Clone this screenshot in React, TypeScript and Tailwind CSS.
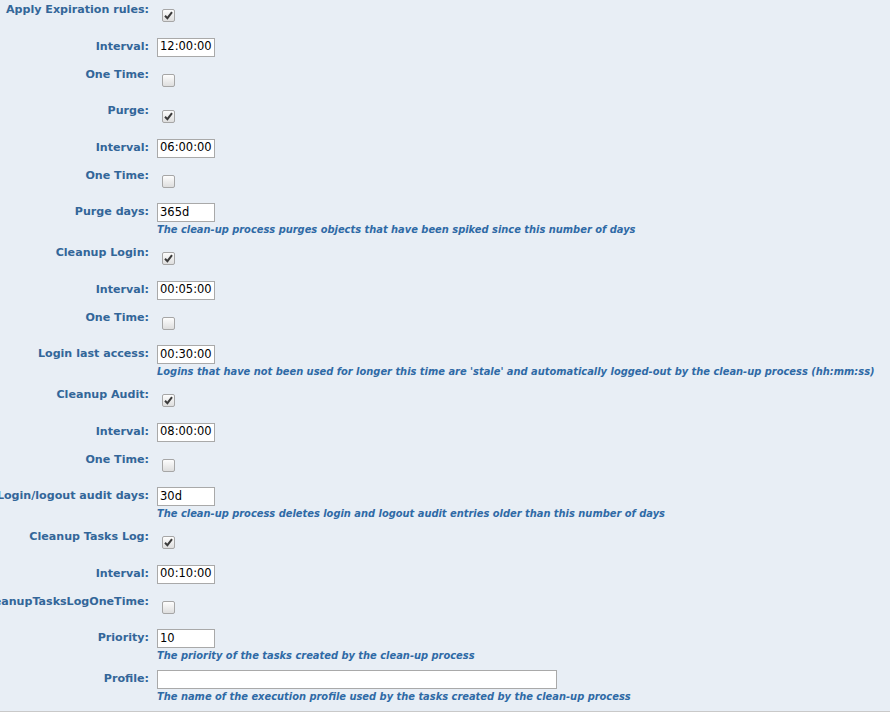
import React from 'react';

type Row = {
  label: string;
  kind: 'check' | 'input' | 'help';
  checked?: boolean;
  value?: string;
  help?: string;
  wide?: boolean;
};

const rows: Row[] = [
  { label: 'Apply Expiration rules:', kind: 'check', checked: true },
  { label: 'Interval:', kind: 'input', value: '12:00:00' },
  { label: 'One Time:', kind: 'check' },
  { label: 'Purge:', kind: 'check', checked: true },
  { label: 'Interval:', kind: 'input', value: '06:00:00' },
  { label: 'One Time:', kind: 'check' },
  {
    label: 'Purge days:',
    kind: 'help',
    value: '365d',
    help: 'The clean-up process purges objects that have been spiked since this number of days',
  },
  { label: 'Cleanup Login:', kind: 'check', checked: true },
  { label: 'Interval:', kind: 'input', value: '00:05:00' },
  { label: 'One Time:', kind: 'check' },
  {
    label: 'Login last access:',
    kind: 'help',
    value: '00:30:00',
    help: "Logins that have not been used for longer this time are 'stale' and automatically logged-out by the clean-up process (hh:mm:ss)",
  },
  { label: 'Cleanup Audit:', kind: 'check', checked: true },
  { label: 'Interval:', kind: 'input', value: '08:00:00' },
  { label: 'One Time:', kind: 'check' },
  {
    label: 'Login/logout audit days:',
    kind: 'help',
    value: '30d',
    help: 'The clean-up process deletes login and logout audit entries older than this number of days',
  },
  { label: 'Cleanup Tasks Log:', kind: 'check', checked: true },
  { label: 'Interval:', kind: 'input', value: '00:10:00' },
  { label: 'CleanupTasksLogOneTime:', kind: 'check' },
  {
    label: 'Priority:',
    kind: 'help',
    value: '10',
    help: 'The priority of the tasks created by the clean-up process',
  },
  {
    label: 'Profile:',
    kind: 'help',
    value: '',
    wide: true,
    help: 'The name of the execution profile used by the tasks created by the clean-up process',
  },
];

function Checkbox({ checked }: { checked?: boolean }) {
  return (
    <span className="mt-[8px] ml-[5px] flex h-[13px] w-[13px] items-center justify-center rounded-[2px] border border-[#a6a6a6] bg-gradient-to-b from-[#fdfdfd] to-[#dedede]">
      {checked && (
        <svg width="9" height="9" viewBox="0 0 9 9">
          <path d="M1 4.8 L3.4 7.2 L8 1.2" fill="none" stroke="#3b3b3b" strokeWidth="2" />
        </svg>
      )}
    </span>
  );
}

function TextBox({ value, wide }: { value?: string; wide?: boolean }) {
  return (
    <div
      className={`flex h-[19px] items-center border border-[#a9a9a9] bg-white pl-[2px] text-[11.5px] leading-none text-black ${
        wide ? 'w-[400px]' : 'w-[58px]'
      }`}
    >
      {value}
    </div>
  );
}

export default function App() {
  return (
    <div className="min-h-[713px] bg-white" style={{ fontFamily: '"DejaVu Sans", Verdana, sans-serif' }}>
      <div className="border-b border-[#c9c9c9] bg-[#e8eef5] pt-[1px]">
        {rows.map((r, i) => (
          <div
            key={i}
            className={`flex ${r.kind === 'check' ? 'h-[36.5px]' : r.kind === 'input' ? 'h-[28px]' : 'h-[41px]'}`}
          >
            <div className="flex w-[149px] shrink-0 justify-end overflow-hidden pt-[2px]">
              <span className="shrink-0 whitespace-nowrap text-[11.1px] leading-[13px] font-bold text-[#336699]">
                {r.label}
              </span>
            </div>
            <div className="flex flex-col pl-[8px]">
              {r.kind === 'check' ? (
                <Checkbox checked={r.checked} />
              ) : (
                <TextBox value={r.value} wide={r.wide} />
              )}
              {r.help && (
                <div className="mt-[2px] whitespace-nowrap text-[9.9px] leading-[12px] font-bold italic text-[#2f6aa6]">
                  {r.help}
                </div>
              )}
            </div>
          </div>
        ))}
      </div>
    </div>
  );
}
